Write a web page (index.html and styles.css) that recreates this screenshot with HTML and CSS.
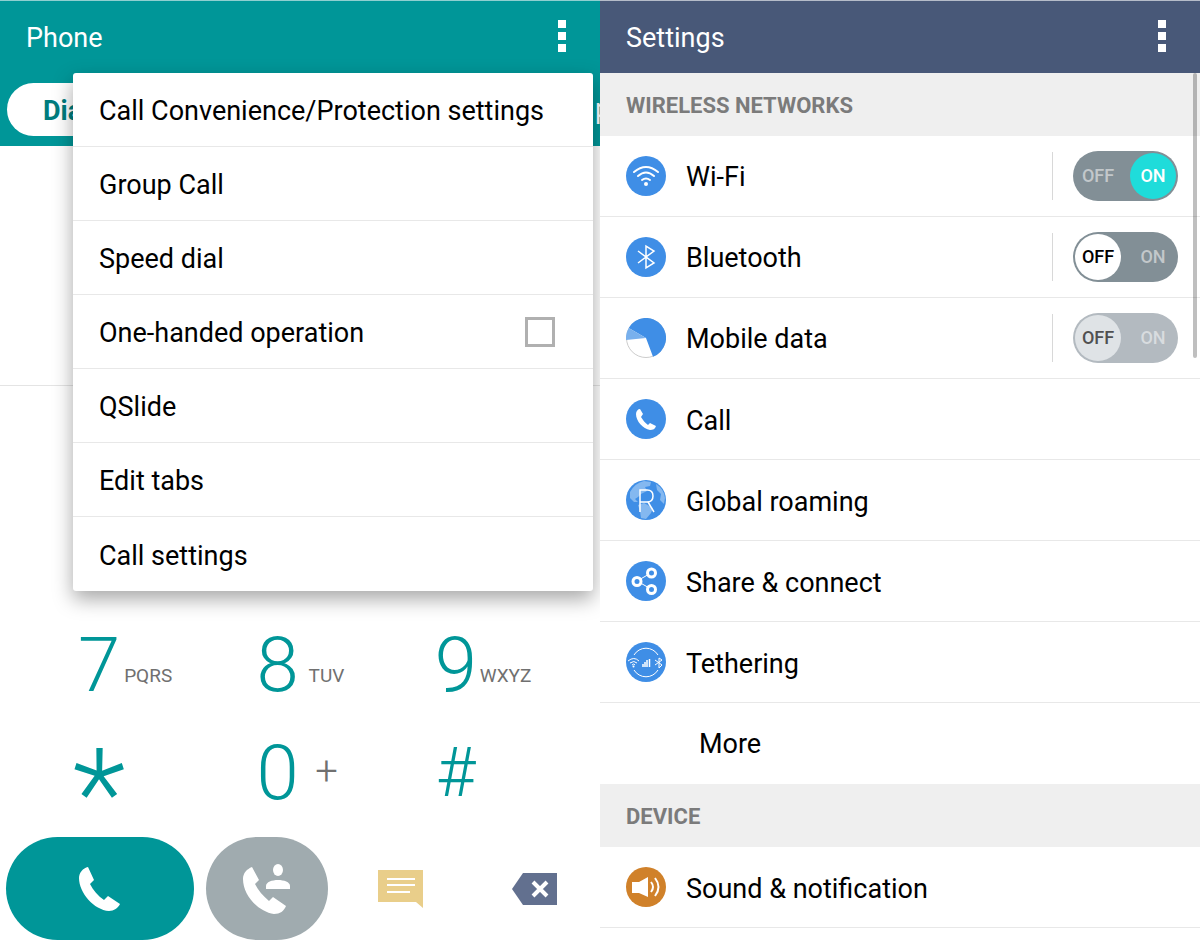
FILE: index.html
```html
<!DOCTYPE html>
<html lang="en">

<head>
    <meta charset="UTF-8">
    <meta name="viewport" content="width=device-width, initial-scale=1.0">
    <title>Phone and Settings</title>
    <link rel="stylesheet" href="styles.css">
</head>

<body>

    <!-- Phone -->
    <section class="screen phone">
        <header class="app-bar">
            <h1>Phone</h1>
            <button type="button" class="kebab" aria-label="More options"><i></i><i></i><i></i></button>
        </header>
        <nav class="tabs">
            <a href="#" class="tab active">Dial</a>
            <a href="#" class="tab next">p</a>
        </nav>
        <div class="display"></div>

        <div class="keypad">
            <button type="button" class="key"><span class="digit">7</span><span class="letters">PQRS</span></button>
            <button type="button" class="key"><span class="digit">8</span><span class="letters">TUV</span></button>
            <button type="button" class="key"><span class="digit">9</span><span class="letters">WXYZ</span></button>
            <button type="button" class="key"><span class="digit star">*</span><span class="letters"></span></button>
            <button type="button" class="key"><span class="digit">0</span><span class="plus">+</span></button>
            <button type="button" class="key"><span class="digit hash">#</span><span class="letters"></span></button>
        </div>

        <div class="actions">
            <button type="button" class="call-button" aria-label="Call">
                <svg width="42" height="46" viewBox="0 0 42 46">
                    <path fill="#fff" d="M9 1 L15 14 L11 18 C14 24 19 30 25 34 L29 30 L41 38 C39 42 35 45 30 45 C15 44 0 27 0 12 C0 7 4 2 9 1Z" />
                </svg>
            </button>
            <button type="button" class="contact-button" aria-label="Call contact">
                <svg width="48" height="50" viewBox="0 0 48 50">
                    <path fill="#fff" d="M9 3 L16 16 L12 20 C15 26 20 32 26 37 L30 33 L43 42 C41 47 37 50 31 50 C15 48 0 31 0 15 C0 9 4 5 9 3Z" />
                    <ellipse cx="35" cy="6" rx="5" ry="6" fill="#fff" />
                    <path fill="#fff" d="M23 25V22C23 18 29 16 35 16S47 18 47 22V25Z" />
                </svg>
            </button>
            <button type="button" class="icon-button" aria-label="Message">
                <svg width="45" height="38" viewBox="0 0 45 38">
                    <path fill="#e9ce8a" d="M0 0H45V38L38 32H0Z" />
                    <path stroke="#fff" stroke-width="2" d="M9 9H37M9 15H37M9 22H32" />
                </svg>
            </button>
            <button type="button" class="icon-button" aria-label="Delete">
                <svg width="45" height="32" viewBox="0 0 45 32">
                    <path fill="#62708f" d="M11 0H45V32H11L0 16Z" />
                    <path stroke="#fff" stroke-width="4" d="M21 9L35 23M35 9L21 23" />
                </svg>
            </button>
        </div>

        <div class="menu">
            <button type="button" class="menu-item">Call Convenience/Protection settings</button>
            <button type="button" class="menu-item">Group Call</button>
            <button type="button" class="menu-item">Speed dial</button>
            <label class="menu-item" for="one-handed">One-handed operation <input type="checkbox" id="one-handed"></label>
            <button type="button" class="menu-item">QSlide</button>
            <button type="button" class="menu-item">Edit tabs</button>
            <button type="button" class="menu-item">Call settings</button>
        </div>
    </section>

    <!-- Settings -->
    <section class="screen settings">
        <header class="app-bar">
            <h1>Settings</h1>
            <button type="button" class="kebab" aria-label="More options"><i></i><i></i><i></i></button>
        </header>
        <div class="scrollbar"></div>

        <h2>WIRELESS NETWORKS</h2>
        <div class="row">
            <svg class="icon" viewBox="0 0 40 40">
                <circle cx="20" cy="20" r="20" fill="#3f8ee6" />
                <g fill="none" stroke="#fff" stroke-width="2" stroke-linecap="round">
                    <path d="M8 16Q20 6 32 16M12 20Q20 13 28 20M16 24Q20 21 24 24" />
                </g>
                <circle cx="20" cy="28" r="2" fill="#fff" />
            </svg>
            <a href="#">Wi-Fi</a>
            <label class="switch">
                <input type="checkbox" aria-label="Wi-Fi" checked>
                <span class="off">OFF</span><span class="on">ON</span>
            </label>
        </div>
        <div class="row">
            <svg class="icon" viewBox="0 0 40 40">
                <circle cx="20" cy="20" r="20" fill="#3f8ee6" />
                <path fill="none" stroke="#fff" stroke-width="1.5" d="M12 14L28 26L20 31V9L28 14L12 26" />
            </svg>
            <a href="#">Bluetooth</a>
            <label class="switch">
                <input type="checkbox" aria-label="Bluetooth">
                <span class="off">OFF</span><span class="on">ON</span>
            </label>
        </div>
        <div class="row">
            <svg class="icon" viewBox="0 0 40 40">
                <circle cx="20" cy="20" r="19.5" fill="#fff" stroke="#ccc" />
                <path fill="#3f8ee6" d="M20 20L2.7 10A20 20 0 1 1 27 38.7Z" />
                <path fill="#78b0ed" d="M20 20L2.7 10A20 20 0 0 0 0 22Z" />
            </svg>
            <a href="#">Mobile data</a>
            <label class="switch disabled">
                <input type="checkbox" aria-label="Mobile data" disabled>
                <span class="off">OFF</span><span class="on">ON</span>
            </label>
        </div>
        <div class="row">
            <svg class="icon" viewBox="0 0 40 40">
                <circle cx="20" cy="20" r="20" fill="#3f8ee6" />
                <path fill="#fff" d="M14 10L17 15L15 18C17 21 19 24 22 26L24 24L30 27C29 30 27 31 24 31C17 30 10 22 10 15C10 12 12 10 14 10Z" />
            </svg>
            <a href="#">Call</a>
        </div>
        <div class="row">
            <svg class="icon" viewBox="0 0 40 40">
                <circle cx="20" cy="20" r="20" fill="#3f8ee6" />
                <g fill="#84b8f0">
                    <path d="M4 12Q9 3 18 1L25 2L24 6L19 7L21 11L15 14L12 17L9 19L12 22L8 22L4 18Z" />
                    <path d="M12 25L18 23L27 28L25 33L20 39L15 38L14 31Z" />
                    <path d="M30 4Q38 9 39 18L38 24L34 20L35 14L31 10Z" />
                </g>
                <path fill="none" stroke="#fff" stroke-width="1.5" d="M14 32V10H21Q27 10 27 16T21 22H14M22 22L28 32" />
            </svg>
            <a href="#">Global roaming</a>
        </div>
        <div class="row">
            <svg class="icon" viewBox="0 0 40 40">
                <circle cx="20" cy="20" r="20" fill="#3f8ee6" />
                <path stroke="#fff" d="M11 20L25 12M11 20L25 28" />
                <g fill="#3f8ee6" stroke="#fff" stroke-width="3">
                    <circle cx="11" cy="20.5" r="4" />
                    <circle cx="25.5" cy="12" r="4" />
                    <circle cx="25.5" cy="28.5" r="4" />
                </g>
            </svg>
            <a href="#">Share &amp; connect</a>
        </div>
        <div class="row">
            <svg class="icon" viewBox="0 0 40 40">
                <circle cx="20" cy="20" r="20" fill="#3f8ee6" />
                <g fill="none" stroke="#fff">
                    <path d="M8 13A14 14 0 0 1 32 13M8 28A14 14 0 0 0 32 28" />
                    <path d="M2 19Q8 14 13 19M4 21Q8 18 11 21M6 23Q8 21 9 23" />
                    <path stroke-width="1.5" d="M17 25V22M19 25V20M21 25V18M23.5 25V17" />
                    <path d="M29 18L36 23L33 26V16L36 18L29 23" />
                </g>
                <circle cx="7.5" cy="24.5" r="1" fill="#fff" />
            </svg>
            <a href="#">Tethering</a>
        </div>
        <div class="row more">
            <a href="#">More</a>
        </div>

        <h2>DEVICE</h2>
        <div class="row">
            <svg class="icon" viewBox="0 0 40 40">
                <circle cx="20" cy="20" r="20" fill="#d0812a" />
                <path fill="#fff" d="M6 15H13L22 10V30L13 26H6Z" />
                <path fill="none" stroke="#fff" stroke-width="2" d="M25 15Q29 20 25 25M29 11Q36 20 29 29" />
            </svg>
            <a href="#">Sound &amp; notification</a>
        </div>
    </section>

</body>

</html>
```
FILE: styles.css
```css
* {
    box-sizing: border-box;
}

body {
    font-family: Roboto, sans-serif;
    font-size: 27px;
    color: #000;
    background-color: #fff;
    margin: 0;
    display: flex;
    min-height: 100vh;
}

button {
    font: inherit;
    color: inherit;
    background: none;
    border: none;
    padding: 0;
    cursor: pointer;
}

a {
    color: inherit;
    text-decoration: none;
}

.screen {
    flex: 1;
    min-width: 0;
    position: relative;
    overflow: hidden;
    display: flex;
    flex-direction: column;
}

.app-bar {
    display: flex;
    align-items: center;
    justify-content: space-between;
    height: 73px;
    padding: 0 16px 0 26px;
    color: #fff;
    border-top: 1px solid #b5bcc9;
}

.app-bar h1 {
    font-size: 27px;
    font-weight: 400;
    margin: 0;
    padding-top: 2px;
}

.kebab {
    display: flex;
    flex-direction: column;
    align-items: center;
    gap: 4px;
    width: 44px;
    padding-bottom: 2px;
}

.kebab i {
    width: 8px;
    height: 8px;
    background-color: #fff;
}

/* phone */

.phone .app-bar {
    background-color: #009698;
    border-top-color: #8fcfd0;
}

.tabs {
    display: flex;
    align-items: center;
    justify-content: space-between;
    height: 73px;
    padding-left: 7px;
    background-color: #009698;
}

.tab {
    line-height: 53px;
    color: #fff;
}

.tab.active {
    width: 160px;
    height: 53px;
    padding-left: 36px;
    border-radius: 27px;
    background-color: #fff;
    color: #007c7e;
    font-weight: 700;
    line-height: 56px;
}

.tab.next {
    width: 5px;
}

.display {
    height: 240px;
    border-bottom: 1px solid #e4e4e4;
}

.keypad {
    flex: 1;
    display: grid;
    grid-template-columns: repeat(3, 1fr);
    grid-auto-rows: 108px;
    align-content: end;
    padding: 0 30px 0 35px;
}

.key {
    display: flex;
    align-items: center;
    justify-content: center;
}

.digit {
    width: 48px;
    height: 108px;
    font-size: 76px;
    font-weight: 300;
    line-height: 112px;
    text-align: center;
    color: #009698;
}

.digit.star {
    display: flex;
    justify-content: center;
    font-size: 124px;
    line-height: 156px;
}

.digit.hash {
    font-size: 68px;
}

.letters,
.plus {
    width: 50px;
    color: #707070;
    text-align: center;
}

.letters {
    font-size: 19px;
    padding-top: 24px;
}

.plus {
    font-size: 40px;
    font-weight: 300;
}

.actions {
    display: flex;
    align-items: center;
    padding: 12px 43px 6px 6px;
}

.call-button,
.contact-button {
    display: flex;
    align-items: center;
    justify-content: center;
    height: 103px;
    border-radius: 52px;
}

.call-button {
    width: 188px;
    background-color: #009698;
}

.contact-button {
    width: 122px;
    margin: 0 50px 0 12px;
    background-color: #a0abaf;
}

.icon-button {
    display: flex;
}

.icon-button:last-child {
    margin-left: auto;
}

.menu {
    position: absolute;
    top: 73px;
    left: 73px;
    right: 7px;
    background-color: #fff;
    border-radius: 3px;
    box-shadow: 0 8px 20px rgba(0, 0, 0, 0.35);
}

.menu-item {
    display: flex;
    align-items: center;
    justify-content: space-between;
    width: 100%;
    height: 74px;
    padding: 3px 38px 0 26px;
    border-bottom: 1px solid #e8e8e8;
}

.menu-item:last-child {
    border-bottom: none;
}

.menu-item input {
    appearance: none;
    width: 30px;
    height: 30px;
    margin: 0 0 2px;
    border: 3px solid #b0b0b0;
}

/* settings */

.settings .app-bar {
    background-color: #485878;
}

.settings h2 {
    margin: 0;
    padding: 2px 26px 0;
    font-size: 22px;
    font-weight: 700;
    line-height: 61px;
    color: #7b7b7b;
    background-color: #efefef;
}

.row {
    display: flex;
    align-items: center;
    gap: 20px;
    height: 81px;
    padding: 0 22px 0 26px;
    border-bottom: 1px solid #e8e8e8;
}

.row a {
    flex: 1;
    padding-top: 3px;
}

.row.more {
    padding-left: 99px;
    border-bottom: none;
}

.row.more a {
    padding-top: 0;
}

.icon {
    width: 40px;
    height: 40px;
}

.switch {
    position: relative;
    display: flex;
    justify-content: space-between;
    width: 105px;
    height: 50px;
    padding: 2px;
    border-radius: 25px;
    background-color: #828f96;
    font-size: 18px;
    font-weight: 500;
    line-height: 46px;
    text-align: center;
    color: #c3c8cb;
}

.row:has(.switch) a {
    padding-top: 2px;
    line-height: 46px;
    border-right: 1px solid #d8d8d8;
}

.switch input {
    position: absolute;
    inset: 0;
    margin: 0;
    opacity: 0;
}

.switch span {
    width: 46px;
    height: 46px;
    border-radius: 50%;
}

.switch input:checked ~ .on {
    background-color: #1fdcda;
    color: #fff;
}

.switch input:not(:checked) ~ .off {
    background-color: #fff;
    color: #000;
}

.switch.disabled {
    background-color: #b3bac0;
    color: #d8dcdf;
}

.switch.disabled input:not(:checked) ~ .off {
    background-color: #dfe3e6;
    color: #505050;
}

.scrollbar {
    position: absolute;
    top: 73px;
    right: 3px;
    width: 4px;
    height: 285px;
    border-radius: 2px;
    background-color: rgba(0, 0, 0, 0.25);
}
```
